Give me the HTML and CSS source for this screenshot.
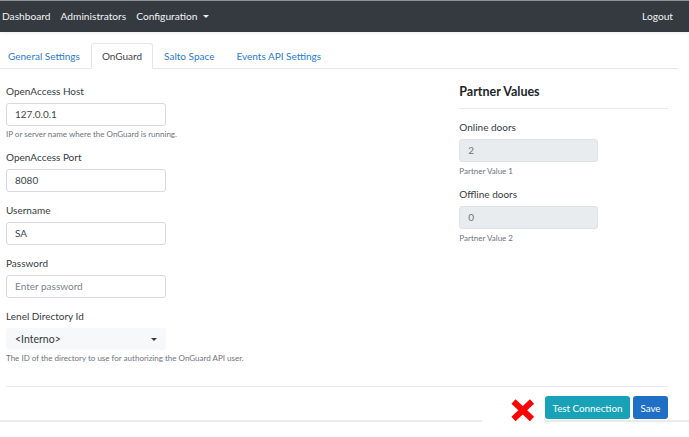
FILE: index.html
```html
<!DOCTYPE html>
<html>
<head>
<meta charset="utf-8">
<link rel="stylesheet" href="styles.css">
</head>
<body>
<nav class="navbar">
  <div class="nav-left">
    <a class="nav-link">Dashboard</a>
    <a class="nav-link">Administrators</a>
    <a class="nav-link dropdown">Configuration <span class="caret"></span></a>
  </div>
  <a class="nav-link">Logout</a>
</nav>
<main class="page">
  <ul class="tabs">
    <li class="tab first">General Settings</li>
    <li class="tab active">OnGuard</li>
    <li class="tab">Salto Space</li>
    <li class="tab">Events API Settings</li>
  </ul>
  <div class="content">
    <div class="columns">
      <div class="col-left">
        <div class="group">
          <label class="label">OpenAccess Host</label>
          <div class="input">127.0.0.1</div>
          <div class="help">IP or server name where the OnGuard is running.</div>
        </div>
        <div class="group">
          <label class="label">OpenAccess Port</label>
          <div class="input">8080</div>
        </div>
        <div class="group">
          <label class="label">Username</label>
          <div class="input">SA</div>
        </div>
        <div class="group">
          <label class="label">Password</label>
          <div class="input placeholder">Enter password</div>
        </div>
        <div class="group last">
          <label class="label">Lenel Directory Id</label>
          <div class="select"><span>&lt;Interno&gt;</span><span class="caret dark"></span></div>
          <div class="help">The ID of the directory to use for authorizing the OnGuard API user.</div>
        </div>
      </div>
      <div class="col-right">
        <h3 class="heading">Partner Values</h3>
        <hr class="rule">
        <div class="group">
          <label class="label">Online doors</label>
          <div class="input disabled">2</div>
          <div class="help">Partner Value 1</div>
        </div>
        <div class="group">
          <label class="label">Offline doors</label>
          <div class="input disabled">0</div>
          <div class="help">Partner Value 2</div>
        </div>
      </div>
    </div>
    <hr class="rule footer-rule">
    <div class="actions">
      <svg class="xicon" width="24" height="24" viewBox="0 0 24 24">
        <path d="M2.5 3.5 L21 21 M21 3.5 L2.5 21" stroke="#ff0000" stroke-width="6" stroke-linecap="butt" fill="none"/>
      </svg>
      <button class="btn btn-info">Test Connection</button>
      <button class="btn btn-primary">Save</button>
    </div>
  </div>
  <div class="bottom-bar">
    <div class="bar-left"></div>
    <div class="bar-gap"></div>
    <div class="bar-right"></div>
  </div>
</main>
</body>
</html>
```

FILE: styles.css
```css
* { box-sizing: border-box; }
body {
  margin: 0;
  font-family: Lato, "Open Sans", sans-serif;
  font-size: 10px;
  color: #212529;
  background: #fff;
}
.navbar {
  height: 32px;
  background: #343a40;
  border-top: 1px solid #8e9297;
  display: flex;
  align-items: center;
  justify-content: space-between;
  padding: 0 16px 1px 2px;
  box-shadow: 0 1px 3px rgba(0,0,0,0.08);
}
.nav-left { display: flex; gap: 10px; align-items: center; }
.nav-link { color: #f1f2f3; font-size: 10.2px; }
.caret {
  display: inline-block;
  width: 0; height: 0;
  border-left: 3px solid transparent;
  border-right: 3px solid transparent;
  border-top: 3.5px solid #eceeef;
  vertical-align: 2px;
  margin-left: 3px;
}
.caret.dark { border-top-color: #343a40; }
.page { padding: 11px 0 0 0; }
.tabs {
  list-style: none;
  margin: 0;
  padding: 0;
  display: flex;
  border-bottom: 1px solid #e3e6e9;
  width: 678px;
  height: 26px;
}
.tab {
  padding: 0 10px;
  height: 26px;
  line-height: 25px;
  color: #2a7ad2;
  font-size: 10px;
  border: 1px solid transparent;
  border-radius: 3px 3px 0 0;
}
.tab.first { padding-left: 7px; }
.tab.active {
  color: #3f454b;
  border-color: #e3e6e9 #e3e6e9 #fff;
  background: #fff;
}
.content { padding: 15px 21px 0 6px; }
.columns { display: flex; }
.col-left { width: 454px; }
.col-right { width: 209px; }
.group { margin-bottom: 11px; }
.group.last { margin-bottom: 0; }
.label {
  display: block;
  line-height: 15px;
  font-size: 10px;
  color: #363b40;
  margin-bottom: 4px;
}
.input {
  width: 160px;
  height: 23px;
  border: 1px solid #d6dade;
  border-radius: 3px;
  padding: 0 8px;
  line-height: 21px;
  font-size: 10px;
  color: #41464c;
}
.input.placeholder { color: #7d848b; }
.col-right .input { width: 139px; }
.input.disabled { background: #e9ecef; border-color: #dfe3e7; color: #6c737a; }
.select {
  width: 160px;
  height: 22px;
  background: #f7f8f9;
  border-radius: 3px;
  padding: 0 9px;
  display: flex;
  align-items: center;
  justify-content: space-between;
  font-size: 10.5px;
  color: #33383d;
}
.help {
  margin-top: 3px;
  line-height: 10px;
  font-size: 8px;
  color: #6c737a;
}
.col-right .help { margin-top: 4px; }
.heading {
  margin: 0;
  font-size: 12.5px;
  font-weight: 700;
  line-height: 16px;
  color: #212529;
}
.rule {
  border: 0;
  border-top: 1px solid #e7e9eb;
  margin: 8px 0 11px 0;
}
.footer-rule { margin: 23px 0 9px 0; }
.actions {
  display: flex;
  justify-content: flex-end;
  align-items: center;
  height: 23px;
}
.xicon { margin-right: 10px; margin-top: 4px; }
.btn {
  font-family: inherit;
  height: 23px;
  border: 0;
  border-radius: 3px;
  color: #fff;
  font-size: 9.8px;
  padding: 0;
  white-space: nowrap;
}
.btn-info { background: #17a2b8; width: 85px; }
.btn-primary { background: #1f6fc4; margin-left: 3px; width: 35px; }
.bottom-bar { display: flex; height: 2px; margin-top: 1px; }
.bar-left { width: 482px; background: #ebebeb; }
.bar-gap { width: 63px; }
.bar-right { flex: 1; background: #ebebeb; }
```
